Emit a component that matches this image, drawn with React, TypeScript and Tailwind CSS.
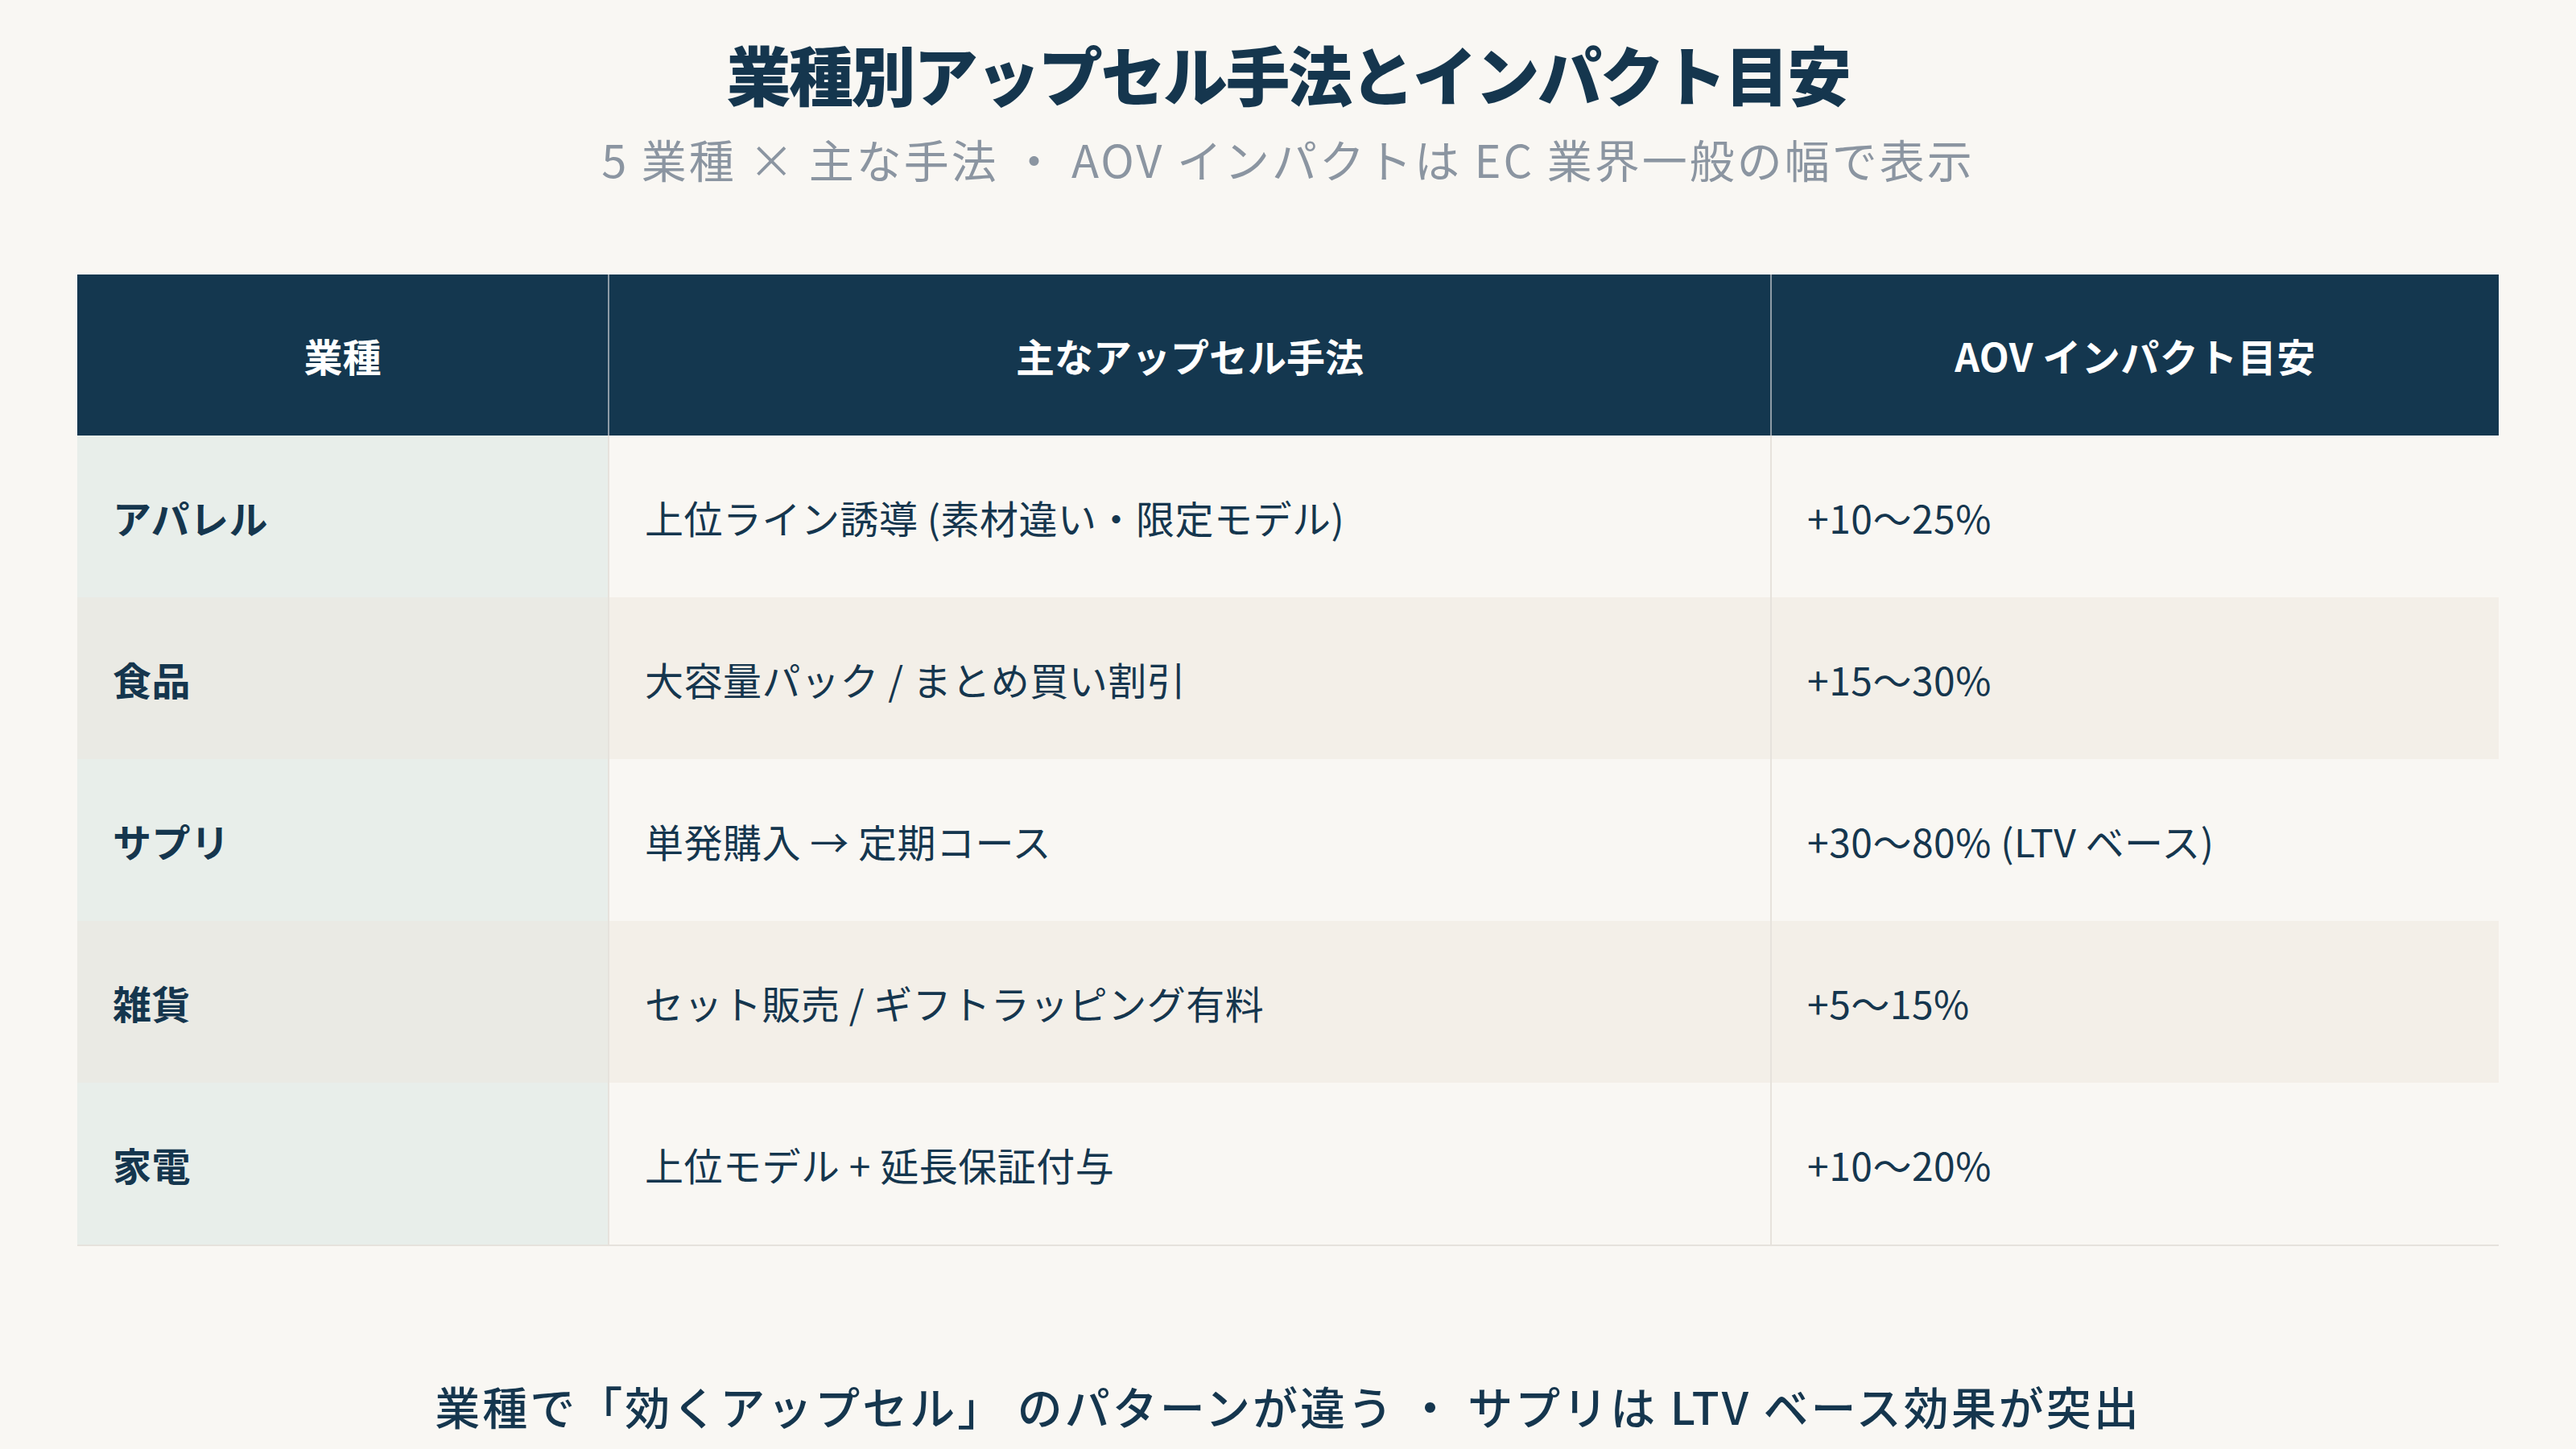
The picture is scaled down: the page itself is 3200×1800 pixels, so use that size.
const rows = [
  { name: 'アパレル', method: '上位ライン誘導 (素材違い・限定モデル)', impact: '+10〜25%' },
  { name: '食品', method: '大容量パック / まとめ買い割引', impact: '+15〜30%' },
  { name: 'サプリ', method: '単発購入 → 定期コース', impact: '+30〜80% (LTV ベース)' },
  { name: '雑貨', method: 'セット販売 / ギフトラッピング有料', impact: '+5〜15%' },
  { name: '家電', method: '上位モデル + 延長保証付与', impact: '+10〜20%' },
];

export default function App() {
  return (
    <div
      className="w-[3200px] h-[1800px] bg-[#f9f7f3] text-[#15364e] flex flex-col items-center"
      style={{ fontFamily: '"Noto Sans CJK JP", "Noto Sans", sans-serif' }}
    >
      {/* Title */}
      <h1 className="mt-[42px] text-[80px] leading-[96px] font-black tracking-[-2.5px]">
        業種別アップセル手法とインパクト目安
      </h1>
      <p className="mt-[25px] text-[56px] leading-[68px] text-[#8b95a1] tracking-[3px]">
        5 業種 × 主な手法 ・ AOV インパクトは EC 業界一般の幅で表示
      </p>

      {/* Table */}
      <div className="mt-[110px] w-[3008px] border-b-2 border-[#e6e2dc]">
        <div className="grid grid-cols-[661px_1444px_903px] h-[200px] bg-[#14374f] text-white text-[48px] font-bold">
          <div className="flex items-center justify-center border-r-2 border-[#8d9ba7]">業種</div>
          <div className="flex items-center justify-center border-r-2 border-[#8d9ba7]">主なアップセル手法</div>
          <div className="flex items-center justify-center tracking-[0.5px]">AOV インパクト目安</div>
        </div>
        {rows.map((r, i) => (
          <div
            key={r.name}
            className={`grid grid-cols-[661px_1444px_903px] h-[201px] text-[48px] tracking-[0.5px] ${
              i % 2 === 1 ? 'bg-[#f3efe8]' : 'bg-[#f9f7f3]'
            }`}
          >
            <div
              className={`flex items-center pl-[44px] font-bold border-r-2 border-[#e6e2dc] ${
                i % 2 === 1 ? 'bg-[#eaeae4]' : 'bg-[#e8eeea]'
              }`}
            >
              {r.name}
            </div>
            <div className="flex items-center pl-[44px] border-r-2 border-[#e6e2dc]">{r.method}</div>
            <div className="flex items-center pl-[44px]">{r.impact}</div>
          </div>
        ))}
      </div>

      {/* Footer note */}
      <p className="mt-[164px] text-[56px] leading-[68px] font-medium tracking-[3px]">
        業種で「効くアップセル」 のパターンが違う ・ サプリは LTV ベース効果が突出
      </p>
    </div>
  );
}
